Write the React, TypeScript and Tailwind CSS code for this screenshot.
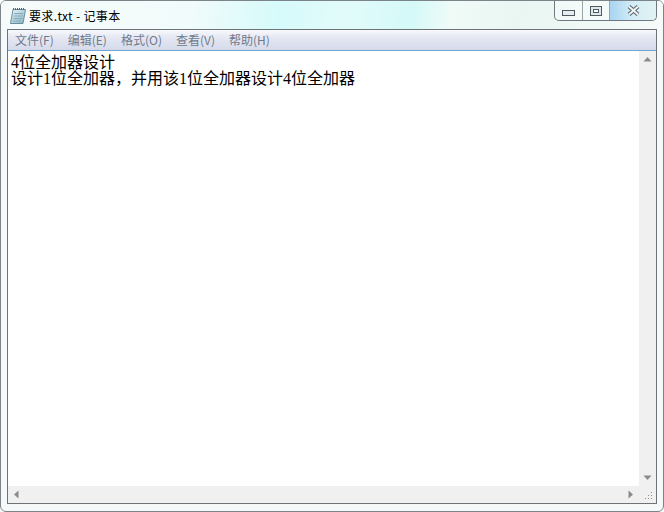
const cjk = { fontFamily: '"Noto Sans CJK SC", sans-serif' };

function NotepadIcon() {
  return (
    <svg width="18" height="18" viewBox="0 0 18 18" className="shrink-0">
      <defs>
        <linearGradient id="pad" x1="0" y1="0" x2="1" y2="1">
          <stop offset="0" stopColor="#eef6f8" />
          <stop offset="0.5" stopColor="#b5d6e0" />
          <stop offset="1" stopColor="#7fb0c4" />
        </linearGradient>
      </defs>
      <path d="M4 2.5 H16.5 L14 16.5 H1.5 Z" fill="url(#pad)" stroke="#6d8c9b" strokeWidth="1" />
      <path d="M4.5 1 V3 M6.5 1 V3 M8.5 1 V3 M10.5 1 V3 M12.5 1 V3 M14.5 1 V3" stroke="#56666f" strokeWidth="1" />
      <path d="M5 6.5 H14 M4.6 9 H13.6 M4.2 11.5 H13.2 M3.8 14 H11.5" stroke="#86a7b6" strokeWidth="1" />
    </svg>
  );
}

function CaptionButtons() {
  return (
    <div className="flex h-[20px] w-[103px] shrink-0 rounded-b-[5px] border border-t-0 border-[#6f7a80] bg-white/30">
      <div className="flex w-[28px] items-end justify-center border-r border-[#9aa5aa] pb-[4px]">
        <div className="h-[6px] w-[13px] border border-[#4d5a62] bg-[#e8eef0]" />
      </div>
      <div className="flex w-[27px] items-center justify-center border-r border-[#9aa5aa]">
        <div className="flex h-[10px] w-[12px] items-center justify-center border border-[#4d5a62] bg-[#dfe8ea]">
          <div className="h-[4px] w-[6px] border border-[#4d5a62] bg-white" />
        </div>
      </div>
      <div className="flex flex-1 items-center justify-center rounded-br-[5px] bg-[linear-gradient(90deg,#a9d4f2,#d4edf8_50%,#e2f3f3)]">
        <svg width="13" height="11" viewBox="0 0 13 11">
          <path d="M2 1.5 L11 9.5 M11 1.5 L2 9.5" stroke="#59646b" strokeWidth="4" />
          <path d="M2 1.5 L11 9.5 M11 1.5 L2 9.5" stroke="#f2f5f6" strokeWidth="2" />
        </svg>
      </div>
    </div>
  );
}

function Arrow({ d }: { d: string }) {
  return (
    <svg width="9" height="9" viewBox="0 0 9 9">
      <path d={d} fill="#8a8a8a" />
    </svg>
  );
}

function Digit({ children }: { children: string }) {
  return <span className="font-['Liberation_Serif']">{children}</span>;
}

const menus = ["文件(F)", "编辑(E)", "格式(O)", "查看(V)", "帮助(H)"];

export default function App() {
  return (
    <div className="flex h-[512px] w-[664px] flex-col overflow-hidden rounded-[6px] border border-[#7b8488] bg-[#f5f9fa] pb-[7px] pl-[6px] pr-[6px]">
      <div
        className="-mx-[6px] flex h-[28px] shrink-0 items-start bg-[linear-gradient(100deg,#f6fbfb_0%,#f2fbfb_28%,#d6fafa_42%,#e2fbfa_52%,#d4f9f8_62%,#f0fbf8_68%,#e9f6f2_78%,#f6fbf9_100%)] px-[6px]"
        style={cjk}
      >
        <div className="flex items-center pl-[2px] pt-[6px]">
          <NotepadIcon />
          <span className="mb-[1px] ml-[2px] text-[12px] leading-[16px] tracking-[0.35px] text-black">要求.txt - 记事本</span>
        </div>
        <div className="ml-auto">
          <CaptionButtons />
        </div>
      </div>
      <div className="flex min-h-0 flex-1 flex-col border border-[#6d7377] bg-white">
        <div
          className="flex h-[21px] shrink-0 items-center gap-[14px] border-b border-[#6fa6d2] bg-[linear-gradient(180deg,#f8f9fc_0%,#e6e9f3_35%,#d5daeb_100%)] pl-[7px]"
          style={cjk}
        >
          {menus.map((m) => (
            <span key={m} className="text-[12px] leading-[16px] text-[#707a8c]">
              {m}
            </span>
          ))}
        </div>
        <div className="flex min-h-0 flex-1">
          <div className="flex-1 pl-[3px] pt-[2px] text-[16px] leading-[16px] text-black" style={cjk}>
            <div className="h-[16px] whitespace-pre">
              <Digit>4</Digit>位全加器设计
            </div>
            <div className="h-[16px] whitespace-pre">
              设计<Digit>1</Digit>位全加器，并用该<Digit>1</Digit>位全加器设计<Digit>4</Digit>位全加器
            </div>
          </div>
          <div className="flex w-[17px] shrink-0 flex-col items-center justify-between bg-[#f0f0f0] py-[4px]">
            <Arrow d="M4.5 2 L8.5 6.5 H0.5 Z" />
            <Arrow d="M0.5 2.5 H8.5 L4.5 7 Z" />
          </div>
        </div>
        <div className="flex h-[17px] shrink-0 bg-[#f0f0f0]">
          <div className="flex flex-1 items-center justify-between px-[4px]">
            <Arrow d="M2 4.5 L6.5 0.5 V8.5 Z" />
            <Arrow d="M2.5 0.5 L7 4.5 L2.5 8.5 Z" />
          </div>
          <div className="flex w-[17px] shrink-0 items-end justify-end p-[3px]">
            <svg width="9" height="9" viewBox="0 0 9 9">
              <path d="M7 1h1v1H7zM4 4h1v1H4zM7 4h1v1H7zM1 7h1v1H1zM4 7h1v1H4zM7 7h1v1H7z" fill="#8f8f8f" />
            </svg>
          </div>
        </div>
      </div>
    </div>
  );
}
